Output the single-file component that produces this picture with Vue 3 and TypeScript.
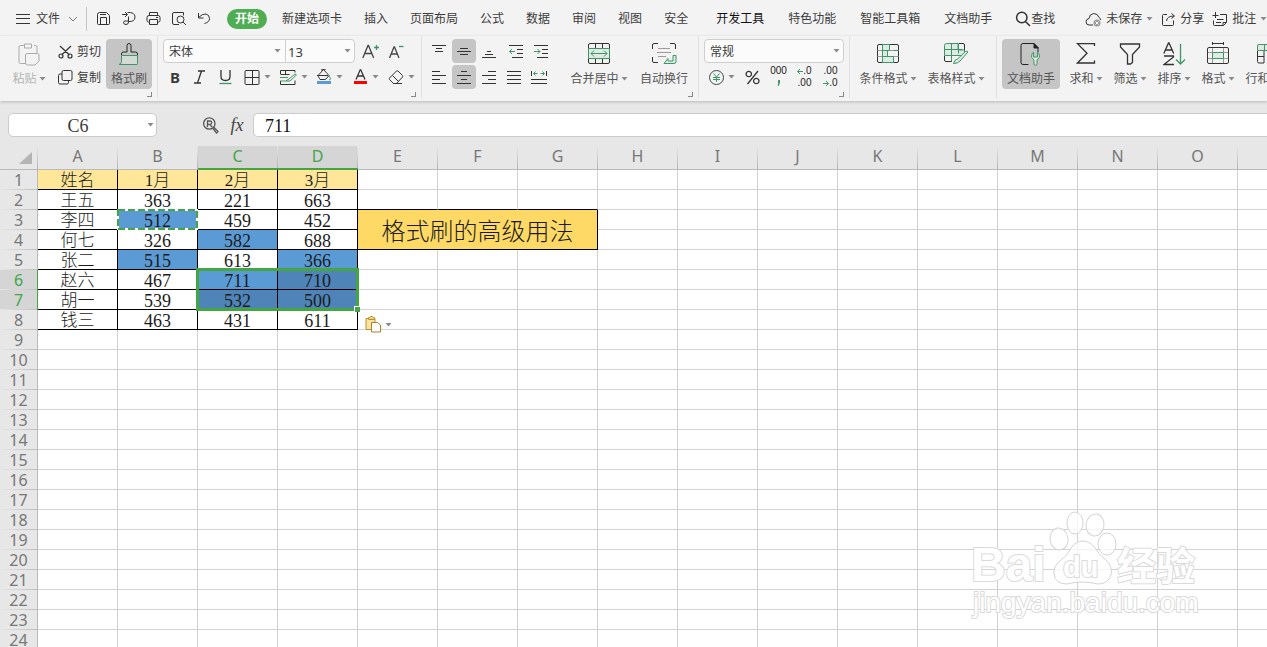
<script setup lang="ts">
import { h, ref } from 'vue'

type Stroke = [d: string, stroke?: string, fill?: string]
interface Glyph { w: number; h: number; p: Stroke[]; sw?: number }

const K = '#333'
const G = '#3f9567'
const L = '#dfeae4'
const M = '#9a9a9a'

const glyphs: Record<string, Glyph> = {
  menu: { w: 14, h: 12, p: [['M0 1.5h14M0 5.5h14M0 10.5h14']] },
  chevron: { w: 10, h: 6, p: [['M1 1l4 4 4-4', '#777']] },
  save: { w: 15, h: 15, p: [['M1.5 12.5v-9q0-2 2-2h7l3 3v8q0 1-1 1h-10q-1 0-1-1zM4.5 13v-6.500h6v6.500M4 3.500h6']] },
  export: { w: 15, h: 15, p: [['M1 3.500h5M4 1l2.500 2.500-2.500 2.500M6.500 1.500q7.500-.5 7.500 4.500t-6.500 4.500M7.500 5.500v5.500q0 2.500-2.500 2.500t-2.500-2 2.500-1.500h3']] },
  print: { w: 15, h: 15, p: [['M3.500 4v-2.500h8v2.500M3.500 11h-1q-1.500 0-1.500-1.500v-3q0-2 2-2h9q2 0 2 2v3q0 1.500-1.500 1.500h-1M3.500 8.500h8v5h-8zM10 6.500h2']] },
  preview: { w: 16, h: 15, p: [['M8 13.500h-5q-1.500 0-1.500-1.500v-9q0-1.500 1.500-1.500h9.500v3M13 8.500a3.500 3.500 0 1 1-7 0a3.500 3.500 0 1 1 7 0M12 11l3 3']] },
  undo: { w: 14, h: 14, p: [['M1.500 2v5h5M1.500 6.500q4-4 7.500-3.500 3.500.8 3.500 4.500t-5 5']] },
  search: { w: 16, h: 16, sw: 1.5, p: [['M12 6.500a5.200 5.200 0 1 1-10.400 0a5.200 5.200 0 1 1 10.400 0M10.500 10.500l4.500 4.500']] },
  cloud: { w: 17, h: 15, p: [['M8 13H4Q1 13 1 9.500 1 7 4 6.500 4.500 2 8.500 1.500 13 1.500 14 5.500 16 6.500 15.500 8'], ['M15.500 11a3.500 3.500 0 1 1-7 0a3.500 3.500 0 1 1 7 0', 'none', M], ['M10.500 9.500l3 3M13.500 9.500l-3 3', '#fff']] },
  share: { w: 15, h: 15, p: [['M6 2.500h-3.500q-1 0-1 1v9q0 1 1 1h9q1 0 1-1v-4M5.500 9q.5-5 7.500-5M10.500 1.500l3 2.500-3 2.500']] },
  note: { w: 16, h: 15, p: [['M3.500 0v6M.500 3.500h6M8 2.500h6.500v8l-3 3h-9q-1 0-1-1v-4M5 7.500h6.500M4 10.500h5M14 10.500h-3v3']] },
  paste: { w: 22, h: 23, p: [['M6 2.500h-3.500q-1.500 0-1.500 1.500v15q0 1.500 1.500 1.500h5M16 2.500h1.500q1.500 0 1.500 1.500v6M6.500 1h7v4h-7zM9.500 10.500h10q1.500 0 1.500 1.500v6l-4 4h-7.500q-2 0-2-2v-8q0-1.500 2-1.500z', '#aaa']] },
  cut: { w: 15, h: 14, sw: 1.2, p: [['M2 1l9.500 9M13 1l-9.500 9M5 11a2 2 0 1 1-4 0a2 2 0 1 1 4 0M14 11a2 2 0 1 1-4 0a2 2 0 1 1 4 0']] },
  copy: { w: 15, h: 15, p: [['M5.500 .500h7q1.500 0 1.500 1.500v7q0 1.500-1.500 1.500h-7q-1.500 0-1.500-1.500v-7q0-1.500 1.500-1.500M4 4h-2q-1.500 0-1.500 1.500v7q0 1.500 1.500 1.500h7q1.500 0 1.500-1.500v-2']] },
  brush: { w: 22, h: 23, p: [['M3.500 12v-1q0-2 2-2h3.500v-6.500q0-2 2-2t2 2v6.500h4.500q2 0 2 2v1', '#222'], ['M3.500 12.500v6q0 2.500-2.500 3h17.500q1 0 1-1v-8z', G, '#d3dbd6'], ['M1 21.500h18', G]] },
  fontUp: { w: 17, h: 17, sw: 1.3, p: [['M.8 15l5.200-12.500h.5l5.200 12.500M2.800 10.500h7', '#444'], ['M12 4.500h5M14.500 2v5', G]] },
  fontDown: { w: 17, h: 17, sw: 1.3, p: [['M1.500 15l4.500-11h.5l4.500 11M3 11h6.500', '#444'], ['M11 3.500h4.500', G]] },
  italic: { w: 12, h: 14, sw: 1.3, p: [['M4 1h7M0 13h7M7.500 1l-4 12']] },
  underline: { w: 13, h: 15, sw: 1.3, p: [['M2 0v6.500q0 4 4.500 4t4.500-4V0'], ['M.500 13.500h12', G]] },
  borders: { w: 16, h: 15, p: [['M2 .5h12q1 0 1 1v12q0 1-1 1h-12q-1 0-1-1v-12q0-1 1-1zM8.500 .5v14M1 7.500h14']] },
  cellStyle: { w: 17, h: 15, p: [['M.5 4v-3.500h14.500v2M.5 11v3.500h14.500v-4M5.500 1v3M.5 4.500h9'], ['M0 7.500h8M0 11h5M9 9l6-5 1.500 1-6.500 6h-4.500z', G]] },
  fill: { w: 16, h: 16, p: [['M3.500 9.500q-2-2-.5-4l4.500-5 5.500 6-3.500 4h-5.500zM1 6.500h11M5 1l5-1'], ['M13 7q3 3.500 0 4', G], ['M1 12h14v3h-14z', 'none', '#5b9bd5']] },
  color: { w: 15, h: 16, sw: 1.3, p: [['M3 10.500L7.200 .800h.6l4.200 9.700M4.500 7h6'], ['M1 12h13v3h-13z', 'none', '#f00']] },
  eraser: { w: 16, h: 15, p: [['M1.500 8l7-7q.8-.5 1.500 0l4.500 4.500q.5.800 0 1.500l-6 6.500h-3l-4-4q-.5-.8 0-1.500zM4.500 5.500l6 6M5 13.500h9']] },
  top: { w: 14, h: 14, p: [['M0 1.500h14M4 4.500h6M3 7.500h8']] },
  middle: { w: 14, h: 14, p: [['M3 4.500h8M0 7.500h14M3 10.500h8']] },
  bottom: { w: 14, h: 14, p: [['M5 7.500h4M3 10.500h8M0 13.500h14']] },
  outdent: { w: 14, h: 14, p: [['M0 1.500h14M8 5.500h6M8 9.500h6M3 13.500h11'], ['M0 7.500h6M3 5l-2.500 2.500 2.500 2.500', G]] },
  indent: { w: 14, h: 14, p: [['M0 1.500h14M8 5.500h6M8 9.500h6M3 13.500h11'], ['M0 7.500h6M3.500 5l2.500 2.500-2.500 2.500', G]] },
  left: { w: 14, h: 14, p: [['M0 1.500h8M0 5.500h14M0 9.500h8M0 13.500h14']] },
  center: { w: 14, h: 14, p: [['M4 1.500h6M0 5.500h14M4 9.500h6M0 13.500h14']] },
  right: { w: 14, h: 14, p: [['M6 1.500h8M0 5.500h14M6 9.500h8M0 13.500h14']] },
  justify: { w: 14, h: 14, p: [['M0 1.500h14M0 5.500h14M0 9.500h14M0 13.500h14']] },
  distribute: { w: 16, h: 14, p: [['M.5 1v5M15.500 1v5M0 9.500h16M0 13.500h16'], ['M2.500 3.500h4M9.500 3.500h4M4.500 1.500l-2 2 2 2M11.500 1.500l2 2-2 2', G]] },
  merge: { w: 22, h: 22, p: [['M2 .5h18q1.500 0 1.500 1.500v17q0 1.500-1.500 1.500h-18q-1.500 0-1.500-1.500v-17q0-1.500 1.500-1.500zM7.500 .5v5M14.500 .5v5M7.500 15.500v5M14.500 15.500v5'], ['M.5 5.500h21v10h-21z', G, L], ['M3 10.500h16M6 7.500l-3 3 3 3M16 7.500l3 3-3 3', G]] },
  wrap: { w: 25, h: 22, p: [['M.5 6v-4q0-1.500 1.500-1.500h4M18 .5h4q1.500 0 1.500 1.500v4M.500 14v4q0 1.500 1.500 1.500h4'], ['M6 5.500h12M5 9.500h14M6 13.500h8', M], ['M21 12.500h3v6q0 2-2 2h-10l4-5v2.500h5z', G, L]] },
  yuan: { w: 15, h: 15, p: [['M14.500 7.500a7 7 0 1 1-14 0a7 7 0 1 1 14 0', '#444'], ['M4.500 3.500l3 3.500 3-3.500M4 7.500h7M4 9.500h7M7.500 7v5', G]] },
  percent: { w: 15, h: 15, sw: 1.3, p: [['M13 1l-10.500 13M6.500 4a2.700 2.700 0 1 1-5.400 0a2.700 2.700 0 1 1 5.400 0M14 11a2.700 2.700 0 1 1-5.400 0a2.700 2.700 0 1 1 5.400 0']] },
  condition: { w: 22, h: 20, p: [['M2 .5h18q1.500 0 1.500 1.500v15q0 1.500-1.500 1.500h-18q-1.500 0-1.500-1.500v-15q0-1.500 1.500-1.500z'], ['M.5 6.500h21M.5 12.500h21', M], ['M5.500 .5h7v6h-7zM5.500 6.500h5v6h-5zM5.500 12.500h11v6h-11z', G, L], ['M16.500 6.500h5', G]] },
  tableStyle: { w: 25, h: 22, p: [['M.5 13v4q0 1.500 1.500 1.500h6M15 .5h4q1.500 0 1.500 1.500v5'], ['M.5 12.500v-10q0-2 2-2h11.500v6.500h6.500v5.500zM.5 6.500h18M7.500 .5v18M14.500 .5v10', G, L], ['M9.500 20.500q1-4 4-4.500l8-7.500q2-1 2.500.5l-8 9q-2 2.500-6.500 2.500z', G, L]] },
  helper: { w: 22, h: 23, p: [['M8.500 21.500h-5.500q-2 0-2-2v-17q0-2 2-2h11l4 4.500v4', '#222'], ['M14 .5v4.500h4.500z', '#222', '#222'], ['M12 10.500q-2 4 2 6.500v4.500q1.500 1.500 3 0v-4.500q4-2.500 2-6.500l-1.500-1v4.500h-4v-4.500z', G, L]] },
  sum: { w: 20, h: 22, sw: 1.3, p: [['M18.500 3v-2.300h-17l9.500 9.500-9.500 9.800h17v-2.500']] },
  filter: { w: 22, h: 22, sw: 1.3, p: [['M1.500 1h19v3l-7 7.500v8l-2 1.500h-3v-9.500l-7-7.500z']] },
  sort: { w: 23, h: 24, sw: 1.3, p: [['M.8 11.500l4.700-10.500h.5l4.700 10.500M2.500 8h6.500M1 14h9.500v1l-9.500 7.500h10'], ['M17.500 2v20M13 17.500l4.500 4.500 4.500-4.500', G]] },
  format: { w: 22, h: 24, p: [['M5.500 0v3M16.500 0v3M5.500 1.500h11M2 5.500h18q1.500 0 1.500 1.500v13q0 1.500-1.500 1.500h-18q-1.500 0-1.500-1.500v-13q0-1.500 1.500-1.500z'], ['M5.500 6v15M16.500 6v15M1 10.500h20M1 16.500h20', M], ['M5.500 10.500h11v6h-11z', G, L]] },
  rowcol: { w: 22, h: 20, p: [['M.5 7v10.500q0 1.500 1.500 1.500h5v-12M.5 12.500h6.500'], ['M2 .5h18q1.500 0 1.500 1.500v4.500h-21v-4.500q0-1.500 1.500-1.500zM7.500 .5v6', G, L]] },
  lookup: { w: 17, h: 17, sw: 1.3, p: [['M13 6.500a5.700 5.700 0 1 1-11.400 0a5.700 5.700 0 1 1 11.400 0', '#555'], ['M5.500 10V4h2.500q1.800.2 1.800 1.700t-1.800 1.600h-2M8 7.500l2 2.500M11 11.500l1-1 4 4-1.500 1.500z', '#555']] },
  clip: { w: 17, h: 17, p: [['M4.500 2.500h-3.500v11h9v-11h-3', '#b8922e', '#fbe3a0'], ['M3.500 3.500v-2h1l1-1h2l1 1h1v2z', '#b8922e', '#f3d17c'], ['M6.500 6.500h6l3 2.500v7h-9z', '#a8822e', '#fff']] },
  caret: { w: 7, h: 4, p: [['M.5 0h6l-3 3.500z', 'none', '#8a8a8a']] },
  less: { w: 6, h: 6, p: [['M.5 3.500h5.500M3 1l-2.500 2.500 2.500 2.500', G]] },
  more: { w: 6, h: 6, p: [['M0 3.500h5.500M3 1l2.500 2.500-2.500 2.500', G]] },
  comma: { w: 4, h: 8, p: [['M1 1h2v3l-1.500 3h-1l.8-3h-.3z', 'none', G]] },
}

const Icon = (props: { name: string }) => {
  const g = glyphs[props.name]
  return h(
    'svg',
    { width: g.w, height: g.h, viewBox: `0 0 ${g.w} ${g.h}`, 'aria-hidden': 'true' },
    g.p.map(([d, stroke, fill]) =>
      h('path', { d, stroke: stroke ?? K, fill: fill ?? 'none', 'stroke-width': g.sw ?? 1 }),
    ),
  )
}
Icon.props = ['name']

const quick = [
  { i: 'save', t: '保存' }, { i: 'export', t: '输出' }, { i: 'print', t: '打印' },
  { i: 'preview', t: '打印预览' }, { i: 'undo', t: '撤销' },
]
const tabs = ['新建选项卡', '插入', '页面布局', '公式', '数据', '审阅', '视图', '安全']
const extraTabs = ['开发工具', '特色功能', '智能工具箱', '文档助手']
const fontTools = [
  { i: 'borders', t: '边框' }, { i: 'cellStyle', t: '单元格样式' }, { i: 'fill', t: '填充颜色' },
  { i: 'color', t: '字体颜色' }, { i: 'eraser', t: '清除' },
]
const vAlign = [{ i: 'top', t: '顶端对齐' }, { i: 'middle', t: '垂直居中' }, { i: 'bottom', t: '底端对齐' }]
const indents = [{ i: 'outdent', t: '减少缩进' }, { i: 'indent', t: '增加缩进' }]
const hAlign = [
  { i: 'left', t: '左对齐' }, { i: 'center', t: '水平居中' }, { i: 'right', t: '右对齐' },
  { i: 'justify', t: '两端对齐' }, { i: 'distribute', t: '分散对齐' },
]
const editTools = [
  { i: 'sum', t: '求和' }, { i: 'filter', t: '筛选' }, { i: 'sort', t: '排序' },
  { i: 'format', t: '格式' }, { i: 'rowcol', t: '行和列' },
]

const nameBox = ref('C6')
const formula = ref('711')

const cols = 'ABCDEFGHIJKLMNOP'.split('')
const rowCount = 24
const data: string[][] = [
  ['姓名', '1月', '2月', '3月'],
  ['王五', '363', '221', '663'],
  ['李四', '512', '459', '452'],
  ['何七', '326', '582', '688'],
  ['张二', '515', '613', '366'],
  ['赵六', '467', '711', '710'],
  ['胡一', '539', '532', '500'],
  ['钱三', '463', '431', '611'],
]
const blue = new Set(['B3', 'C4', 'B5', 'D5', 'C6'])
const shaded = new Set(['D6', 'C7', 'D7'])
const covered = new Set(['F3', 'G3', 'E4', 'F4', 'G4'])

const text = (r: number, c: number) => data[r - 1]?.[c] ?? ''
const cellsOf = (r: number) => cols.map((name, c) => ({ c, id: name + r })).filter((x) => !covered.has(x.id))
const cellClass = (r: number, c: number, id: string) => ({
  filled: c < 4 && r <= 8,
  han: c === 0 || r === 1,
  head: c < 4 && r === 1,
  blue: blue.has(id),
  shaded: shaded.has(id),
  above: r === 2 && c >= 4 && c <= 6,
  title: id === 'E3',
  anchor: id === 'B3' || id === 'C6' || id === 'E8',
})
</script>

<template>
  <div class="app">
    <header class="menubar">
      <button class="file"><Icon name="menu" />文件<Icon name="chevron" /></button>
      <div class="quick">
        <button v-for="q in quick" :key="q.i" :aria-label="q.t"><Icon :name="q.i" /></button>
      </div>
      <button class="tab-active">开始</button>
      <nav class="tabs"><button v-for="t in tabs" :key="t">{{ t }}</button></nav>
      <nav class="tabs extra"><button v-for="t in extraTabs" :key="t">{{ t }}</button></nav>
      <button class="find"><Icon name="search" />查找</button>
      <div class="status">
        <button><Icon name="cloud" />未保存<Icon name="caret" /></button>
        <button><Icon name="share" />分享</button>
        <button><Icon name="note" />批注<Icon name="caret" /></button>
      </div>
    </header>

    <section class="ribbon">
      <div class="group clipboard">
        <button class="big off"><span class="pic"><Icon name="paste" /></span><span class="cap">粘贴<Icon name="caret" /></span></button>
        <div class="stack">
          <button class="small"><Icon name="cut" />剪切</button>
          <button class="small"><Icon name="copy" />复制</button>
        </div>
        <button class="big painter on"><span class="pic"><Icon name="brush" /></span><span class="cap">格式刷</span></button>
        <i class="launcher"></i>
      </div>

      <div class="group font">
        <div class="stack">
          <div class="line">
            <div class="combos">
              <label class="combo face"><select aria-label="字体"><option>宋体</option></select><Icon name="caret" /></label>
              <label class="combo size"><select aria-label="字号"><option>13</option></select><Icon name="caret" /></label>
            </div>
            <button class="tool grow" aria-label="增大字号"><Icon name="fontUp" /></button>
            <button class="tool" aria-label="减小字号"><Icon name="fontDown" /></button>
          </div>
          <div class="line">
            <button class="tool bold">B</button>
            <button class="tool" aria-label="斜体"><Icon name="italic" /></button>
            <button class="tool" aria-label="下划线"><Icon name="underline" /></button>
            <div class="line pickers">
              <button v-for="f in fontTools" :key="f.i" class="tool drop" :aria-label="f.t"><Icon :name="f.i" /><Icon name="caret" /></button>
            </div>
          </div>
        </div>
        <i class="launcher"></i>
      </div>

      <div class="group align">
        <div class="stack">
          <div class="line">
            <button v-for="a in vAlign" :key="a.i" class="tool" :class="{ on: a.i === 'middle' }" :aria-label="a.t"><Icon :name="a.i" /></button>
            <div class="line indents">
              <button v-for="a in indents" :key="a.i" class="tool" :aria-label="a.t"><Icon :name="a.i" /></button>
            </div>
          </div>
          <div class="line">
            <button v-for="a in hAlign" :key="a.i" class="tool" :class="{ on: a.i === 'center' }" :aria-label="a.t"><Icon :name="a.i" /></button>
          </div>
        </div>
        <button class="big wide merge"><span class="pic"><Icon name="merge" /></span><span class="cap">合并居中<Icon name="caret" /></span></button>
        <button class="big wraps"><span class="pic"><Icon name="wrap" /></span><span class="cap">自动换行</span></button>
        <i class="launcher"></i>
      </div>

      <div class="group number">
        <div class="stack">
          <div class="combos">
            <label class="combo kind"><select aria-label="数字格式"><option>常规</option></select><Icon name="caret" /></label>
          </div>
          <div class="line">
            <button class="tool drop" aria-label="货币"><Icon name="yuan" /><Icon name="caret" /></button>
            <button class="tool mid" aria-label="百分比"><Icon name="percent" /></button>
            <button class="tool mid digits"><span>000</span><span><Icon name="comma" /></span></button>
            <button class="tool mid digits"><span><Icon name="less" />.0</span><span>.00</span></button>
            <button class="tool mid digits"><span>.00</span><span><Icon name="more" />.0</span></button>
          </div>
        </div>
        <i class="launcher"></i>
      </div>

      <div class="group styles">
        <button class="big wide"><span class="pic"><Icon name="condition" /></span><span class="cap">条件格式<Icon name="caret" /></span></button>
        <button class="big wide"><span class="pic"><Icon name="tableStyle" /></span><span class="cap">表格样式<Icon name="caret" /></span></button>
      </div>

      <div class="group edit">
        <button class="big helper on"><span class="pic"><Icon name="helper" /></span><span class="cap">文档助手</span></button>
        <button v-for="e in editTools" :key="e.i" class="big narrow"><span class="pic"><Icon :name="e.i" /></span><span class="cap">{{ e.t }}<Icon name="caret" /></span></button>
      </div>
    </section>

    <section class="formula-bar">
      <label class="name-box"><input v-model="nameBox" aria-label="名称框" /><Icon name="caret" /></label>
      <button class="lookup" aria-label="查找函数"><Icon name="lookup" /></button>
      <button class="fx">fx</button>
      <input v-model="formula" class="formula" aria-label="编辑栏" />
    </section>

    <main class="sheet">
      <table>
        <colgroup><col class="gutter" /><col v-for="c in cols" :key="c" class="col" /></colgroup>
        <thead>
          <tr>
            <th class="corner"><svg width="14" height="13" viewBox="0 0 14 13" aria-hidden="true"><path d="M13 0v12H0z" fill="#b4b4b4" /></svg></th>
            <th v-for="c in cols" :key="c" :class="{ picked: c === 'C' || c === 'D' }">{{ c }}</th>
          </tr>
        </thead>
        <tbody>
          <tr v-for="r in rowCount" :key="r">
            <th :class="{ picked: r === 6 || r === 7 }">{{ r }}</th>
            <td
              v-for="x in cellsOf(r)"
              :key="x.id"
              :class="cellClass(r, x.c, x.id)"
              :rowspan="x.id === 'E3' ? 2 : 1"
              :colspan="x.id === 'E3' ? 3 : 1"
            >
              {{ x.id === 'E3' ? '格式刷的高级用法' : text(r, x.c) }}
              <svg v-if="x.id === 'B3'" class="marching" aria-hidden="true">
                <rect x="1" y="1" width="79" height="19" fill="none" stroke="#fff" stroke-width="2" />
                <rect x="1" y="1" width="79" height="19" fill="none" stroke="#43a643" stroke-width="2" stroke-dasharray="7 3" />
              </svg>
              <span v-if="x.id === 'C6'" class="range"><i></i></span>
              <button v-if="x.id === 'E8'" class="paste-options" aria-label="粘贴选项"><Icon name="clip" /><Icon name="caret" /></button>
            </td>
          </tr>
        </tbody>
      </table>

      <svg class="watermark" width="236" height="116" viewBox="0 0 236 116">
        <g fill="#fff" fill-opacity=".75" stroke="#d4d4d4" stroke-width="1">
          <ellipse cx="109" cy="17" rx="8" ry="11" />
          <ellipse cx="129" cy="19" rx="9" ry="11" transform="rotate(8 129 19)" />
          <ellipse cx="93" cy="33" rx="9" ry="11" transform="rotate(-8 93 33)" />
          <ellipse cx="141" cy="38" rx="9" ry="11" />
          <path d="M117 35q7 0 12 7 4 7 11 12 7 7 5 15-3 9-13 9-8-2-16-2t-15 2q-12 0-13-10-1-8 7-14 7-5 10-12 5-7 12-7z" />
          <g stroke="#dadada" stroke-width="2" paint-order="stroke" fill-opacity="1">
            <text class="brand" x="5" y="75">Bai</text>
            <text class="du" x="97" y="71">du</text>
            <text class="han-mark" x="151" y="74">经验</text>
            <text class="site" x="7" y="106">jingyan.baidu.com</text>
          </g>
        </g>
      </svg>
    </main>
  </div>
</template>

<style>
html,
body {
  margin: 0;
  overflow: hidden;
}
</style>

<style scoped>
.app {
  display: flex;
  flex-direction: column;
  height: 100vh;
  overflow: hidden;
  background: #fff;
  color: #3c3c3c;
  font: 12px/18px "Noto Sans", "Noto Sans CJK SC", sans-serif;
}
svg {
  flex: none;
}
button,
input,
select {
  box-sizing: border-box;
  margin: 0;
  padding: 0;
  border: 0;
  background: none;
  color: inherit;
  font: inherit;
  white-space: nowrap;
  outline: none;
}
button {
  flex: none;
}

/* menu bar */
.menubar {
  display: flex;
  flex: none;
  align-items: center;
  height: 36px;
  padding: 2px 0 0 16px;
  box-sizing: border-box;
  background: #f3f3f3;
  overflow: hidden;
}
.file {
  display: flex;
  align-items: center;
  gap: 6px;
  height: 24px;
  padding-right: 8px;
  border-right: 1px solid #c6c6c6;
}
.file svg:last-child {
  margin-left: 2px;
}
.quick {
  display: flex;
  flex: none;
  gap: 2px;
  margin: 0 12px 0 5px;
  padding-bottom: 2px;
}
.quick button {
  display: grid;
  place-items: center;
  width: 23px;
  height: 24px;
}
.tab-active {
  width: 40px;
  height: 20px;
  border-radius: 10px;
  background: #4fad54;
  color: #fff;
  font-weight: 700;
}
.tabs {
  display: flex;
  flex: none;
  gap: 22px;
  margin-left: 15px;
}
.tabs.extra {
  gap: 24px;
  margin-left: 28px;
}
.extra button:first-child {
  color: #111;
}
.find,
.status,
.status button {
  display: flex;
  flex: none;
  align-items: center;
}
.find {
  margin-left: 23px;
}
.status {
  gap: 8px;
  margin-left: 30px;
}
.status button {
  gap: 4px;
}

/* ribbon */
.ribbon {
  position: relative;
  z-index: 1;
  display: flex;
  flex: none;
  height: 65px;
  background: #f3f3f3;
  box-shadow: 0 1px 3px #bbb;
  overflow: hidden;
}
.group {
  position: relative;
  display: flex;
  flex: none;
  align-items: flex-start;
  height: 62px;
  padding: 3px 5px 0;
  box-sizing: border-box;
  border-right: 1px solid #e0e0e0;
}
.launcher {
  position: absolute;
  right: 5px;
  bottom: 1px;
  width: 4px;
  height: 4px;
  border: solid #888;
  border-width: 0 1px 1px 0;
}
.stack {
  display: flex;
  flex-direction: column;
  gap: 2px;
}
.line {
  display: flex;
  align-items: center;
  gap: 1px;
  height: 24px;
}
.big {
  display: flex;
  flex-direction: column;
  align-items: center;
  height: 50px;
  padding-top: 3px;
  border-radius: 4px;
  color: #555;
}
.pic {
  display: grid;
  place-items: center;
  height: 24px;
}
.cap {
  display: flex;
  align-items: center;
  gap: 2px;
  margin-top: 4px;
}
.on {
  background: #c5c5c5;
}
.off {
  color: #b4b4b4;
}
.clipboard {
  padding-left: 8px;
}
.clipboard .big {
  width: 42px;
}
.clipboard .painter {
  width: 46px;
}
.clipboard .stack {
  margin: 0 4px;
}
.small {
  display: flex;
  align-items: center;
  justify-content: space-between;
  width: 48px;
  height: 24px;
  padding: 1px 1px 0 4px;
}
.font {
  padding-right: 2px;
}
.combos {
  display: flex;
  box-sizing: border-box;
  height: 24px;
  border: 1px solid #cfcfcf;
  border-radius: 4px;
  background: #fbfbfb;
}
.combo {
  display: flex;
  align-items: center;
  box-sizing: border-box;
  padding: 0 6px 0 5px;
}
.combo select {
  flex: 1;
  min-width: 0;
  height: 22px;
  padding-top: 1px;
  appearance: none;
}
.face {
  width: 121px;
  padding-right: 4px;
}
.size {
  width: 69px;
  padding: 0 3px 0 2px;
  border-left: 1px solid #cfcfcf;
  font-size: 13px;
}
.kind {
  width: 138px;
  padding-right: 3px;
}
.tool {
  display: flex;
  align-items: center;
  justify-content: center;
  width: 24px;
  height: 24px;
  border-radius: 4px;
}
.grow {
  margin: 0 1px 0 2px;
}
.bold {
  font-size: 15px;
  font-weight: 700;
}
.pickers,
.indents {
  margin-left: 2px;
}
.drop {
  gap: 4px;
  width: 35px;
}
.mid {
  width: 25px;
}
.merge {
  margin-left: 14px;
}
.wraps {
  width: 56px;
  margin: 0 1px 0 5px;
}
.wide {
  width: 64px;
}
.digits {
  flex-direction: column;
  font: 10px/12px "Liberation Sans", sans-serif;
  color: #222;
}
.digits span {
  display: flex;
  align-items: center;
  height: 12px;
}
.styles {
  gap: 4px;
  padding: 3px 8px 0 6px;
}
.edit {
  gap: 4px;
  border: 0;
}
.helper {
  width: 58px;
  margin-right: 2px;
}
.narrow {
  min-width: 40px;
}
.narrow:last-child {
  width: 52px;
}

/* formula bar */
.formula-bar {
  display: flex;
  flex: none;
  align-items: flex-start;
  height: 45px;
  padding: 12px 0 0 8px;
  box-sizing: border-box;
  background: #e7e7e7;
  font: 18px/20px "Liberation Serif", serif;
}
.name-box {
  display: flex;
  flex: none;
  align-items: center;
  width: 149px;
  height: 24px;
  box-sizing: border-box;
  padding-right: 2px;
  border: 1px solid #ccc;
  border-radius: 5px;
  background: #fff;
}
.name-box input {
  flex: 1;
  min-width: 0;
  height: 22px;
  padding-top: 3px;
  text-align: center;
}
.lookup {
  display: grid;
  place-items: center;
  width: 24px;
  height: 24px;
  margin-left: 41px;
}
.fx {
  width: 24px;
  height: 24px;
  margin: 0 4px 0 3px;
  color: #444;
  font-style: italic;
}
.formula {
  flex: 1;
  min-width: 0;
  height: 24px;
  padding: 2px 0 0 11px;
  border: 1px solid #ccc;
  border-right: 0;
  border-radius: 5px 0 0 5px;
  background: #fff;
  color: #111;
}

/* sheet */
.sheet {
  position: relative;
  flex: 1;
  min-height: 0;
  overflow: hidden;
}
table {
  width: 1318px;
  table-layout: fixed;
  border-collapse: separate;
  border-spacing: 0;
}
.gutter {
  width: 38px;
}
.col {
  width: 80px;
}
th,
td {
  box-sizing: border-box;
  height: 20px;
  padding: 0;
  text-align: center;
  line-height: 19px;
  white-space: nowrap;
}
th {
  background: linear-gradient(90deg, #e7e7e7, #bdbdbd) bottom / 100% 1px no-repeat #e7e7e7;
  border-right: 1px solid #b9b9b9;
  color: #777;
  font-size: 16px;
  font-weight: 400;
}
thead th {
  height: 24px;
  padding-right: 1px;
  border-right: 0;
  border-bottom: 1px solid #b9b9b9;
  background: linear-gradient(#e7e7e7, #b4b4b4) right / 1px 100% no-repeat #e7e7e7;
  line-height: 20px;
  vertical-align: top;
}
th.picked {
  background-color: #d5d5d5;
  border-right-color: #43a643;
  color: #3fa648;
}
thead th.picked {
  border-bottom: 2px solid #43a643;
}
th.corner svg {
  display: block;
  margin: 6px 0 4px 19px;
}
td {
  padding-top: 3px;
  border: solid #d2d2d2;
  border-width: 0 1px 1px 0;
  color: #1c1c1c;
  font: 18px/16px "Liberation Serif", "Noto Sans CJK SC", serif;
}
td.filled {
  border-color: #000;
}
td.han {
  padding-top: 2px;
  font-size: 17px;
  font-weight: 300;
  line-height: 17px;
}
td.head {
  background: #ffe699;
}
td.blue {
  background: #5b9bd5;
}
td.shaded {
  background: #4e84b7;
}
td.above {
  border-bottom-color: #000;
}
td.title {
  padding-top: 4px;
  border-color: #000;
  background: #ffd966;
  font-size: 24px;
  font-weight: 300;
  line-height: 24px;
}
td.anchor {
  position: relative;
}
.marching {
  position: absolute;
  top: -1px;
  left: -1px;
  width: 81px;
  height: 21px;
}
.range {
  position: absolute;
  z-index: 2;
  top: -2px;
  left: -2px;
  width: 163px;
  height: 43px;
  box-sizing: border-box;
  border: 3px solid #43a643;
}
.range i {
  position: absolute;
  right: -4px;
  bottom: -4px;
  width: 5px;
  height: 5px;
  border: solid #fff;
  border-width: 1px 0 0 1px;
  background: #43a643;
}
.paste-options {
  position: absolute;
  top: 6px;
  left: 7px;
  display: flex;
  align-items: center;
  gap: 3px;
}
.watermark {
  position: absolute;
  right: 65px;
  bottom: 25px;
}
.brand {
  font: 700 48px "Liberation Sans", sans-serif;
}
.du {
  font: 700 29px "Liberation Sans", sans-serif;
}
.han-mark {
  font: 700 39px "Noto Sans CJK SC", sans-serif;
}
.site {
  font: 28px "Liberation Sans", sans-serif;
}
</style>
